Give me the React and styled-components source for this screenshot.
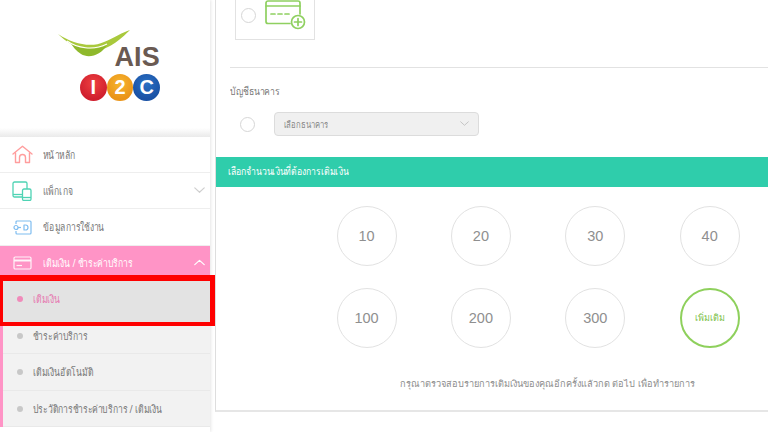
import React from "react";
import styled, { createGlobalStyle } from "styled-components";

const Global = createGlobalStyle`
  html, body { margin: 0; padding: 0; background: #fff; overflow: hidden; }
  body { font-family: "Noto Sans", "Liberation Sans", "DejaVu Sans", sans-serif; }
  * { box-sizing: border-box; }
`;

const Page = styled.div`
  width: 768px;
  height: 432px;
  display: flex;
  overflow: hidden;
  background: #fff;
`;

const Sidebar = styled.aside`
  width: 210px;
  flex: none;
  height: 432px;
  background: #fff;
  box-shadow: 1px 0 3px rgba(0, 0, 0, 0.1);
  display: flex;
  flex-direction: column;
`;

const LogoArea = styled.div`
  height: 137px;
  flex: none;
  padding: 29px 0 0 57px;
  background: linear-gradient(to bottom, #fff 0, #fff 128px, #eaeaea 137px);
`;

const LogoTop = styled.div`
  height: 40px;
  width: 104px;
  position: relative;
`;

const AisText = styled.span`
  position: absolute;
  right: 1px;
  top: 12px;
  font-family: "Liberation Sans", sans-serif;
  font-weight: 700;
  font-size: 27px;
  line-height: 32px;
  letter-spacing: 0.2px;
  color: #6a5a52;
`;

const Balls = styled.div`
  display: flex;
  margin: 5px 0 0 23px;
`;

const Ball = styled.span`
  width: 26.7px;
  height: 27px;
  border-radius: 50%;
  background: radial-gradient(circle at 50% 35%, ${(p) => p.$light} 0, ${(p) => p.$bg} 70%);
  color: #fff;
  display: flex;
  align-items: center;
  justify-content: center;
  font-family: "Liberation Sans", sans-serif;
  font-weight: 700;
  font-size: 20px;
`;

const MenuRow = styled.div`
  height: ${(p) => p.$h}px;
  flex: none;
  display: flex;
  align-items: center;
  padding: 0 5px 0 12px;
  background: ${(p) => (p.$open ? "#ff94c6" : "#fff")};
  border-bottom: ${(p) => (p.$open ? "none" : "1px solid #eeeeee")};
  color: ${(p) => (p.$open ? "#fff" : "#777")};
  font-size: 11px;
`;

const MenuIcon = styled.span`
  width: 21px;
  height: 21px;
  flex: none;
  display: flex;
  align-items: center;
  justify-content: center;
  margin-right: 10px;
`;

/* The reference's Thai face is condensed; no installed face is, so the text is narrowed. */
const Narrow = styled.span`
  display: inline-block;
  white-space: nowrap;
  transform: scaleX(${(p) => p.$x || 0.78});
  transform-origin: left center;
`;

const MenuLabel = styled.span`
  flex: 1;
  min-width: 0;
`;

const SubList = styled.div`
  border-left: 3px solid #ff94c6;
  display: flex;
  flex-direction: column;
  flex: none;
`;

const SubRow = styled.div`
  position: relative;
  z-index: ${(p) => (p.$active ? 2 : 1)};
  height: ${(p) => p.$h}px;
  display: flex;
  align-items: center;
  padding-left: 14px;
  background: #f2f2f2;
  border-bottom: ${(p) => (p.$active ? "none" : "1px solid #e9e9e9")};
  color: ${(p) => (p.$active ? "#f57fbb" : "#777")};
  font-size: 11px;
`;

const Dot = styled.span`
  width: 6px;
  height: 6px;
  border-radius: 50%;
  flex: none;
  margin-right: 10px;
  background: ${(p) => (p.$active ? "#ff94c6" : "#c8c8c8")};
`;

const RedFrame = styled.span`
  position: absolute;
  left: -3px;
  top: -4px;
  width: 215px;
  height: 51px;
  border-style: solid;
  border-color: #fe0000;
  border-width: 6px 5px 4px 3px;
  background: rgba(0, 0, 0, 0.06);
  pointer-events: none;
`;

const Main = styled.main`
  margin-left: 5px;
  width: 553px;
  height: 412px;
  flex: none;
  border-left: 1px solid #dedede;
  border-bottom: 2px solid #e6e6e6;
  display: flex;
  flex-direction: column;
`;

const CardWrap = styled.div`
  padding: 0 0 0 19px;
  height: 68px;
  flex: none;
`;

const PayCard = styled.div`
  width: 80px;
  height: 40px;
  border: 1px solid #e2e2e2;
  border-top: none;
  display: flex;
  align-items: flex-start;
  padding: 0 0 0 5px;
  gap: 9px;
`;

const CardRadio = styled.span`
  width: 15px;
  height: 15px;
  margin-top: 8px;
  border-radius: 50%;
  border: 1px solid #d6d6d6;
  flex: none;
`;

const Radio = styled.span`
  width: 15px;
  height: 15px;
  border-radius: 50%;
  border: 1px solid #d6d6d6;
  background: #fff;
  flex: none;
`;

const Divider = styled.div`
  height: 1px;
  background: #e2e2e2;
  margin: -1px 0 0 14px;
  flex: none;
`;

const BankSection = styled.div`
  padding: 15px 0 0 14px;
  height: 89px;
  flex: none;
`;

const BankLabel = styled.div`
  font-size: 10.5px;
  line-height: 16px;
  color: #777;
`;

const BankRow = styled.div`
  display: flex;
  align-items: center;
  margin-top: 13px;
  padding-left: 10px;
  gap: 19px;
`;

const BankSelect = styled.div`
  width: 205px;
  height: 24px;
  background: #f0f0f0;
  border: 1px solid #dcdcdc;
  border-radius: 4px;
  display: flex;
  align-items: center;
  justify-content: space-between;
  padding: 0 9px;
  font-size: 9.5px;
  color: #888;
`;

const Banner = styled.div`
  height: 30px;
  flex: none;
  background: #2fcdab;
  color: #fff;
  font-size: 10.5px;
  display: flex;
  align-items: center;
  padding: 0 0 2px 12px;
`;

const Amounts = styled.div`
  display: grid;
  grid-template-columns: repeat(4, 60px);
  column-gap: 54.4px;
  row-gap: 22px;
  padding: 19px 0 0 120.5px;
`;

const Amount = styled.div`
  width: 60px;
  height: 60px;
  border-radius: 50%;
  border: ${(p) => (p.$more ? "2px solid #8ed05c" : "1.5px solid #e2e2e2")};
  color: ${(p) => (p.$more ? "#7cc04a" : "#8f8f8f")};
  font-family: "Liberation Sans", sans-serif;
  font-size: ${(p) => (p.$more ? "9px" : "14.5px")};
  display: flex;
  align-items: center;
  justify-content: center;
  white-space: nowrap;
`;

const Note = styled.p`
  margin: 29px 0 0 0;
  padding-left: 184px;
  font-size: 9.2px;
  line-height: 14px;
  color: #8d8d8d;
  white-space: nowrap;
`;

const Home = () => (
  <svg width="21" height="19" viewBox="0 0 21 19" fill="none" stroke="#ff9d9d" strokeWidth="1.4" strokeLinejoin="round" strokeLinecap="round">
    <path d="M1 9 10.5 1.2 20 9" />
    <path d="M3.5 8V17.5H7.5V12.5a3 3 0 0 1 6 0V17.5H17.5V8" />
  </svg>
);
const Devices = () => (
  <svg width="21" height="20" viewBox="0 0 21 20" fill="none" stroke="#4fd3b4" strokeWidth="1.3" strokeLinejoin="round">
    <rect x="1" y="1" width="14" height="15" rx="1.5" />
    <path d="M1 13.5H10" />
    <rect x="10.5" y="8" width="8.5" height="11.5" rx="1.5" fill="#fff" />
    <path d="M10.5 16.5H19" />
  </svg>
);
const IdCard = () => (
  <svg width="19" height="15" viewBox="0 0 19 15" fill="none" stroke="#7fbdf0" strokeWidth="1.2" strokeLinejoin="round">
    <path d="M3 4V2a1 1 0 0 1 1-1H17a1 1 0 0 1 1 1V13a1 1 0 0 1-1 1H4a1 1 0 0 1-1-1V11" />
    <circle cx="3" cy="7.5" r="2" fill="#fff" />
    <path d="M5 7.5H8" />
    <path d="M11 5H12.5a2.5 2.5 0 0 1 0 5H11Z" />
  </svg>
);
const PinkCard = () => (
  <svg width="19" height="14" viewBox="0 0 19 14" fill="none" stroke="#fff" strokeWidth="1.2" opacity="0.9">
    <rect x="1" y="1" width="17" height="12" rx="1.2" />
    <path d="M1 4.5H18" strokeWidth="2" />
    <path d="M3.5 9.5H9" />
  </svg>
);
const Chevron = ({ up, color = "#cfcfcf", size = 11 }) => (
  <svg width={size} height={size * 0.6} viewBox="0 0 14 8" fill="none" stroke={color} strokeWidth="1.5" strokeLinecap="round" strokeLinejoin="round">
    <path d={up ? "M1 7 7 1.5 13 7" : "M1 1 7 6.5 13 1"} />
  </svg>
);
const CardPlus = () => (
  <svg width="41" height="30" viewBox="0 0 41 30" fill="none" stroke="#8fd060" strokeWidth="1.7" strokeLinecap="round" strokeLinejoin="round">
    <path d="M25 23.5H3a2 2 0 0 1-2-2V3a2 2 0 0 1 2-2H33a2 2 0 0 1 2 2V14" />
    <path d="M1 6H35" />
    <path d="M6 14H10M13 14H17M20 14H24" />
    <circle cx="33" cy="22" r="6.5" />
    <path d="M33 18.5V25.5M29.5 22H36.5" />
  </svg>
);
const Swoosh = () => (
  <svg width="74" height="31" viewBox="0 0 74 31" style={{ position: "absolute", left: 0, top: 0 }}>
    <path d="M1 5C16 15 34 19 47 13 57 9 66 3 73 1 62 12 46 26 28 21 17 18 8 12 1 5Z" fill="#a9c93c" />
    <path d="M13 13C22 20 36 23 50 16 44 26 32 30 24 25 19 22 16 18 13 13Z" fill="#8fb92c" />
    <path d="M10 12C20 19 36 22 50 15" fill="none" stroke="#fff" strokeWidth="1.2" />
  </svg>
);

const amounts = ["10", "20", "30", "40", "100", "200", "300"];

export default function App() {
  return (
    <Page>
      <Global />
      <Sidebar>
        <LogoArea>
          <LogoTop>
            <Swoosh />
            <AisText>AIS</AisText>
          </LogoTop>
          <Balls>
            <Ball $bg="#d01f2e" $light="#ee4040">I</Ball>
            <Ball $bg="#ea9418" $light="#f7b52f">2</Ball>
            <Ball $bg="#1a52a5" $light="#2a70c4">C</Ball>
          </Balls>
        </LogoArea>
        <MenuRow $h={36}>
          <MenuIcon><Home /></MenuIcon>
          <MenuLabel><Narrow>หน้าหลัก</Narrow></MenuLabel>
        </MenuRow>
        <MenuRow $h={36}>
          <MenuIcon><Devices /></MenuIcon>
          <MenuLabel><Narrow>แพ็กเกจ</Narrow></MenuLabel>
          <Chevron />
        </MenuRow>
        <MenuRow $h={37}>
          <MenuIcon><IdCard /></MenuIcon>
          <MenuLabel><Narrow>ข้อมูลการใช้งาน</Narrow></MenuLabel>
        </MenuRow>
        <MenuRow $open $h={33}>
          <MenuIcon><PinkCard /></MenuIcon>
          <MenuLabel><Narrow>เติมเงิน / ชำระค่าบริการ</Narrow></MenuLabel>
          <Chevron up color="#fff" />
        </MenuRow>
        <SubList>
          <SubRow $active $h={40}>
            <Dot $active />
            <Narrow>เติมเงิน</Narrow>
            <RedFrame />
          </SubRow>
          <SubRow $h={35}><Dot /><Narrow>ชำระค่าบริการ</Narrow></SubRow>
          <SubRow $h={37}><Dot /><Narrow>เติมเงินอัตโนมัติ</Narrow></SubRow>
          <SubRow $h={36}><Dot /><Narrow>ประวัติการชำระค่าบริการ / เติมเงิน</Narrow></SubRow>
        </SubList>
      </Sidebar>
      <Main>
        <CardWrap>
          <PayCard>
            <CardRadio />
            <CardPlus />
          </PayCard>
        </CardWrap>
        <Divider />
        <BankSection>
          <BankLabel><Narrow $x={0.82}>บัญชีธนาคาร</Narrow></BankLabel>
          <BankRow>
            <Radio />
            <BankSelect>
              <Narrow $x={0.81}>เลือกธนาคาร</Narrow>
              <Chevron size={9} color="#c4c4c4" />
            </BankSelect>
          </BankRow>
        </BankSection>
        <Banner><Narrow $x={0.82}>เลือกจำนวนเงินที่ต้องการเติมเงิน</Narrow></Banner>
        <Amounts>
          {amounts.map((a) => (
            <Amount key={a}>{a}</Amount>
          ))}
          <Amount $more>เพิ่มเติม</Amount>
        </Amounts>
        <Note>กรุณาตรวจสอบรายการเติมเงินของคุณอีกครั้งแล้วกด ต่อไป เพื่อทำรายการ</Note>
      </Main>
    </Page>
  );
}
